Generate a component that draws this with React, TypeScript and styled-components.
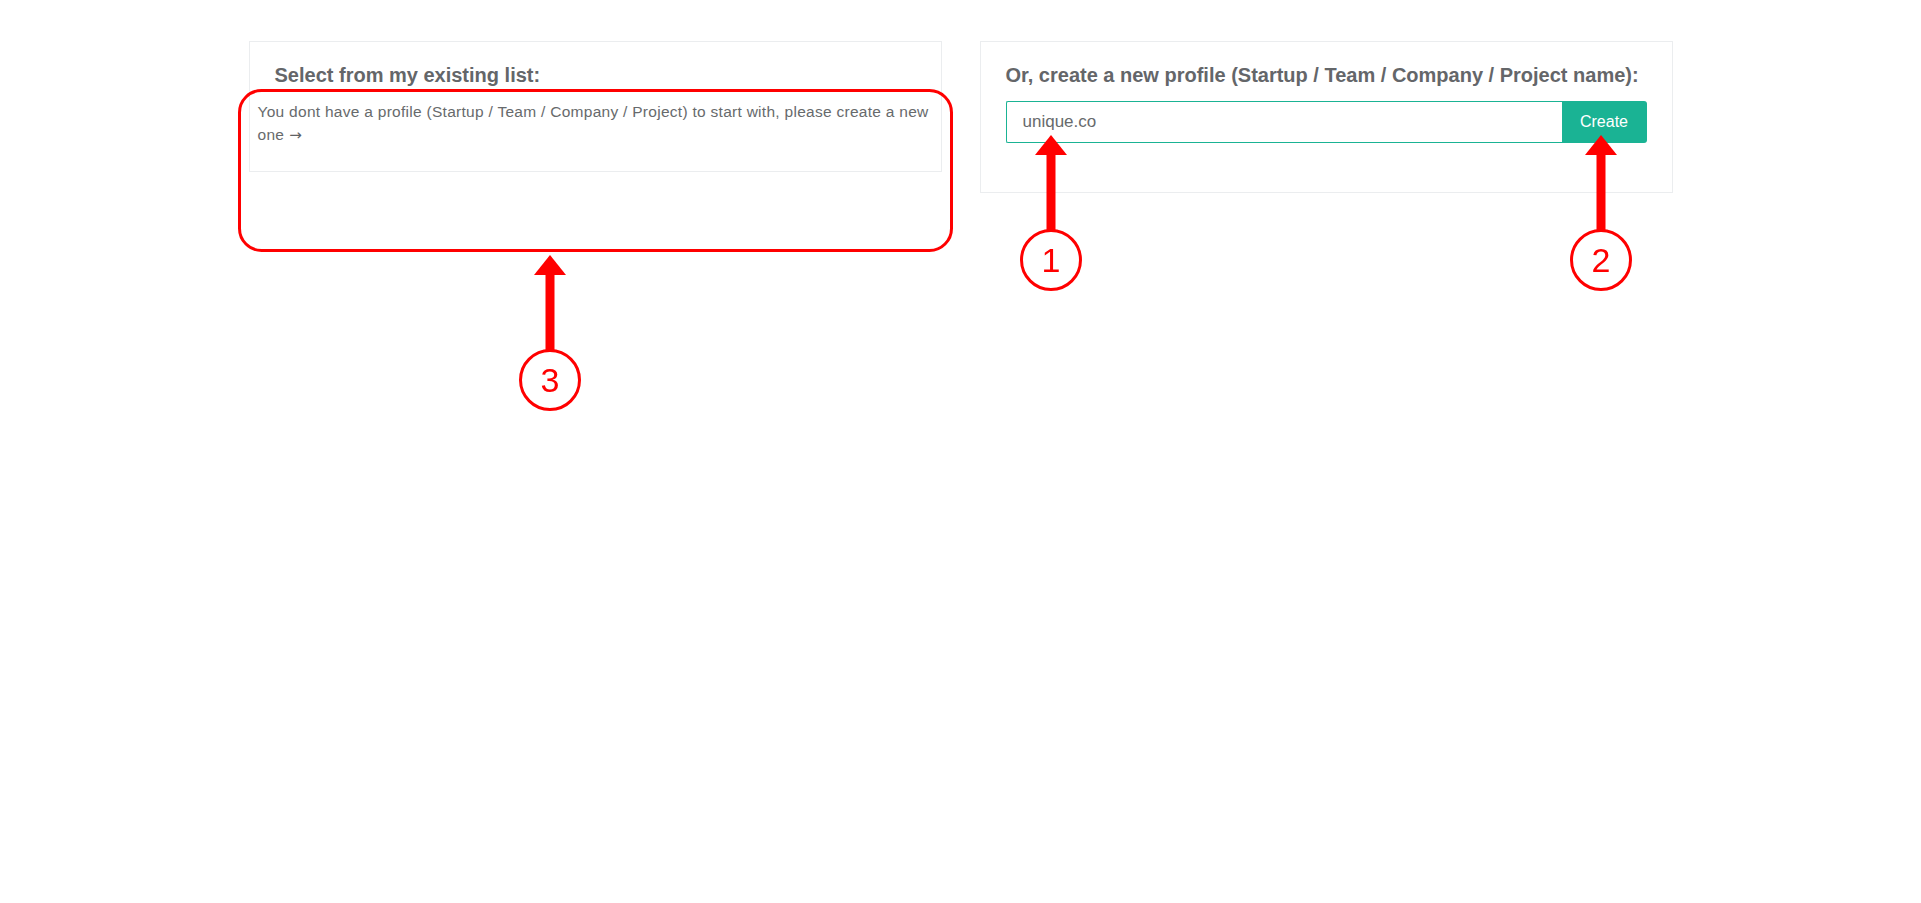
import React from "react";
import styled, { createGlobalStyle } from "styled-components";

const GlobalStyle = createGlobalStyle`
  html, body {
    margin: 0;
    padding: 0;
    background: #ffffff;
  }
  body {
    font-family: "Liberation Sans", Arial, Helvetica, sans-serif;
    color: #676a6c;
  }
`;

const Page = styled.div`
  position: relative;
  width: 1921px;
  height: 903px;
  box-sizing: border-box;
  padding-top: 41px;
  display: flex;
  justify-content: center;
  align-items: flex-start;
  gap: 38px;
`;

const Card = styled.section`
  width: 693px;
  box-sizing: border-box;
  border: 1px solid #ebedef;
  background: #ffffff;
`;

const CardTitle = styled.h3`
  margin: 0;
  padding: 22px 25px 0;
  font-size: 20px;
  line-height: 23px;
  font-weight: 700;
  color: #646669;
`;

const EmptyNote = styled.p`
  margin: 0;
  padding: 13px 8px 25px;
  font-size: 15.5px;
  letter-spacing: 0.28px;
  line-height: 23px;
  color: #676a6c;
`;

const Arrow = styled.span`
  display: inline-block;
  margin-left: 5px;
  font-family: "DejaVu Sans", sans-serif;
  font-size: 15px;
  line-height: 1;
  letter-spacing: 0;
  color: #5f6264;
`;

const InputRow = styled.form`
  display: flex;
  padding: 14px 25px 49px;
`;

const NameInput = styled.input`
  flex: 1;
  height: 42px;
  box-sizing: border-box;
  border: 1px solid #1ab394;
  border-right: none;
  border-radius: 2px 0 0 2px;
  padding: 0 16px;
  font-family: "Liberation Sans", Arial, sans-serif;
  font-size: 17px;
  color: #676a6c;
  outline: none;
  caret-color: #333;
`;

const CreateButton = styled.button`
  width: 85px;
  height: 42px;
  border: none;
  border-radius: 0 3px 3px 0;
  background: #1ab394;
  color: #ffffff;
  font-family: "Liberation Sans", Arial, sans-serif;
  font-size: 16px;
  cursor: pointer;
`;

const Overlay = styled.svg`
  position: absolute;
  left: 0;
  top: 0;
  pointer-events: none;
  overflow: visible;
`;

const Marker = ({ x, tip, cy, label }: { x: number; tip: number; cy: number; label: string }) => (
  <g>
    <polygon points={`${x},${tip} ${x - 16},${tip + 20} ${x + 16},${tip + 20}`} fill="#ff0000" />
    <rect x={x - 4.5} y={tip + 19} width={9} height={cy - 30 - tip - 18} fill="#ff0000" />
    <circle cx={x} cy={cy} r={29.5} fill="#ffffff" stroke="#ff0000" strokeWidth={3} />
    <text
      x={x}
      y={cy + 12}
      textAnchor="middle"
      fontFamily="'Liberation Sans', Arial, sans-serif"
      fontSize={34}
      fill="#ff0000"
    >
      {label}
    </text>
  </g>
);

export default function App() {
  return (
    <>
      <GlobalStyle />
      <Page>
        <Card>
          <CardTitle>Select from my existing list:</CardTitle>
          <EmptyNote>
            You dont have a profile (Startup / Team / Company / Project) to start with, please create a new one
            <Arrow>→</Arrow>
          </EmptyNote>
        </Card>
        <Card>
          <CardTitle>Or, create a new profile (Startup / Team / Company / Project name):</CardTitle>
          <InputRow onSubmit={(e) => e.preventDefault()}>
            <NameInput defaultValue="unique.co" autoFocus />
            <CreateButton type="submit">Create</CreateButton>
          </InputRow>
        </Card>
        <Overlay width={1921} height={903} viewBox="0 0 1921 903">
          <rect x={239.5} y={90.5} width={712} height={160} rx={22} ry={22} fill="none" stroke="#ff0000" strokeWidth={3} />
          <Marker x={550} tip={255} cy={380} label="3" />
          <Marker x={1051} tip={135} cy={260} label="1" />
          <Marker x={1601} tip={135} cy={260} label="2" />
        </Overlay>
      </Page>
    </>
  );
}
